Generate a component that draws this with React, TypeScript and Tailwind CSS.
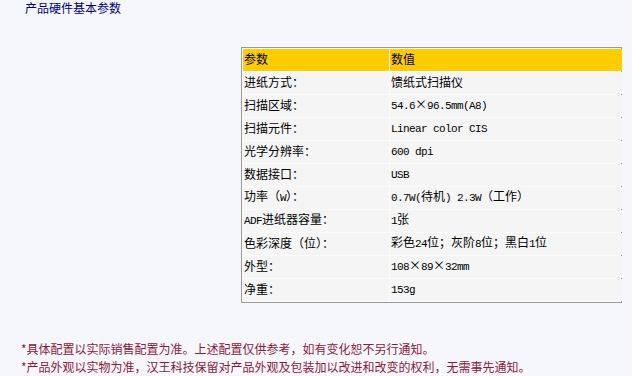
import React from "react";

const rows: [string, string][] = [
  ["进纸方式：", "馈纸式扫描仪"],
  ["扫描区域：", "54.6×96.5mm(A8)"],
  ["扫描元件：", "Linear color CIS"],
  ["光学分辨率：", "600 dpi"],
  ["数据接口：", "USB"],
  ["功率（W）：", "0.7W(待机) 2.3W（工作）"],
  ["ADF进纸器容量：", "1张"],
  ["色彩深度（位）：", "彩色24位；灰阶8位；黑白1位"],
  ["外型：", "108×89×32mm"],
  ["净重：", "153g"],
];

function Mixed({ text }: { text: string }) {
  const parts = text.split(/([\x20-\x7e]+)/).filter((p) => p.length > 0);
  return (
    <span className="whitespace-pre">
      {parts.map((p, i) =>
        /^[\x20-\x7e]+$/.test(p) ? (
          <span
            key={i}
            className="font-['Liberation_Mono',monospace] text-[11px] tracking-[-0.6px]"
          >
            {p}
          </span>
        ) : (
          <span key={i}>{p}</span>
        )
      )}
    </span>
  );
}

export default function App() {
  return (
    <div className="min-h-[376px] w-[632px] bg-[#f5f7fc] font-['Noto_Sans_CJK_SC',sans-serif] text-[12px] leading-[14px] text-black">
      <div className="h-[14px] pl-[25px] pt-px leading-[13px] text-[#000080]">产品硬件基本参数</div>
      <div className="ml-[241px] mt-[33px] w-[381px] border border-[#999999] bg-[#fbfbfb] p-px">
        <div className="grid grid-cols-[146px_232px] gap-px">
          <div className="flex h-[22px] items-center bg-[#ffcc00] pb-[3px] pl-[1px]">参数</div>
          <div className="flex h-[22px] items-center bg-[#ffcc00] pb-[3px] pl-[1px]">数值</div>
          {rows.map(([k, v]) => (
            <React.Fragment key={k}>
              <div className="flex h-[22px] items-center bg-[#f5f5f5] pb-[3px] pl-[1px]">
                <Mixed text={k} />
              </div>
              <div className="flex h-[22px] items-center bg-[#f5f5f5] pb-[3px] pl-[1px]">
                <Mixed text={v} />
              </div>
            </React.Fragment>
          ))}
        </div>
      </div>
      <div className="mt-[37px] pl-[21px] leading-[18px] text-[#8b1a3a]">
        <div>*具体配置以实际销售配置为准。上述配置仅供参考，如有变化恕不另行通知。</div>
        <div>*产品外观以实物为准，汉王科技保留对产品外观及包装加以改进和改变的权利，无需事先通知。</div>
      </div>
    </div>
  );
}
